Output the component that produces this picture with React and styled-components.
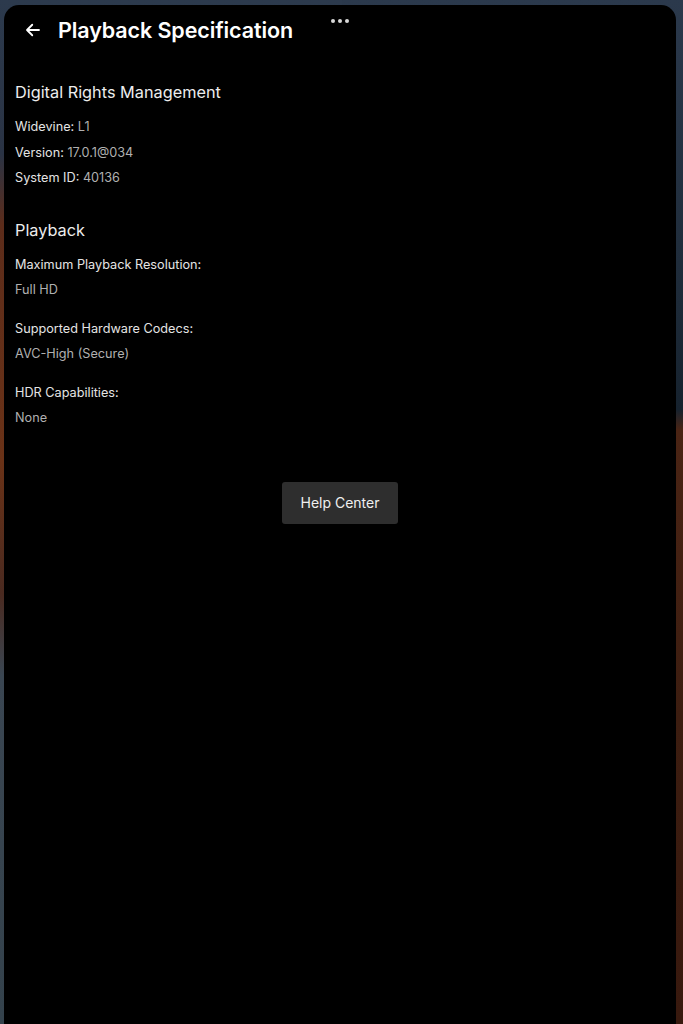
import React from "react";
import styled, { createGlobalStyle } from "styled-components";

const sections = [
  {
    title: "Digital Rights Management",
    inline: true,
    items: [
      { label: "Widevine:", value: "L1" },
      { label: "Version:", value: "17.0.1@034" },
      { label: "System ID:", value: "40136" }
    ]
  },
  {
    title: "Playback",
    inline: false,
    items: [
      { label: "Maximum Playback Resolution:", value: "Full HD" },
      { label: "Supported Hardware Codecs:", value: "AVC-High (Secure)" },
      { label: "HDR Capabilities:", value: "None" }
    ]
  }
];

export default function App() {
  return (
    <>
      <GlobalStyle />
      <Screen>
        <Panel>
          <Handle>
            <Dot />
            <Dot />
            <Dot />
          </Handle>
          <Header>
            <BackButton aria-label="Back">
              <svg width="18" height="18" viewBox="0 0 24 24" fill="none">
                <path
                  d="M20 12H5M11 5l-7 7 7 7"
                  stroke="#fff"
                  strokeWidth="2.4"
                  strokeLinecap="round"
                  strokeLinejoin="round"
                />
              </svg>
            </BackButton>
            <Title>Playback Specification</Title>
          </Header>
          <Content>
            {sections.map(section => (
              <Section key={section.title}>
                <SectionTitle>{section.title}</SectionTitle>
                {section.inline
                  ? section.items.map(item => (
                      <Line key={item.label}>
                        <Label>{item.label}</Label> <Value>{item.value}</Value>
                      </Line>
                    ))
                  : section.items.map(item => (
                      <Block key={item.label}>
                        <Line>
                          <Label>{item.label}</Label>
                        </Line>
                        <Line>
                          <Value>{item.value}</Value>
                        </Line>
                      </Block>
                    ))}
              </Section>
            ))}
            <ButtonRow>
              <HelpButton>Help Center</HelpButton>
            </ButtonRow>
          </Content>
        </Panel>
      </Screen>
    </>
  );
}

// Styles

const GlobalStyle = createGlobalStyle`
  html, body {
    margin: 0;
    height: 100%;
  }
  body {
    font-family: Inter, "Noto Sans", sans-serif;
    background:
      linear-gradient(180deg, #2b394c 0%, #1d2a38 30%, #16222e 40%, #4a2414 42%, #3c1d10 70%, #38190e 100%) right top / 50% 100% no-repeat,
      linear-gradient(180deg, #2c3a4d 0%, #2a3344 15%, #5c2c1a 22%, #6a3217 45%, #4a2a20 58%, #3a4652 66%, #34424c 100%) left top / 52% 100% no-repeat;
  }
  #root {
    height: 100%;
  }
`;

const Screen = styled.div`
  height: 100%;
  display: flex;
  flex-direction: column;
  padding: 5px 7px 0 4px;
  box-sizing: border-box;
`;

const Panel = styled.div`
  position: relative;
  flex: 1;
  background: #000;
  border-radius: 15px 15px 0 0;
  display: flex;
  flex-direction: column;
`;

const Handle = styled.div`
  position: absolute;
  top: 14px;
  left: 50%;
  transform: translateX(-50%);
  display: flex;
  gap: 3px;
`;

const Dot = styled.span`
  width: 4px;
  height: 4px;
  border-radius: 50%;
  background: #d8d8d8;
`;

const Header = styled.div`
  height: 50px;
  display: flex;
  align-items: center;
  padding-left: 20px;
  gap: 16px;
`;

const BackButton = styled.button`
  background: none;
  border: 0;
  padding: 0;
  display: flex;
  align-items: center;
  cursor: pointer;
`;

const Title = styled.h1`
  margin: 0;
  color: #fff;
  font-size: 21.5px;
  font-weight: 600;
  letter-spacing: -0.1px;
`;

const Content = styled.div`
  padding: 26px 11px 0;
  display: flex;
  flex-direction: column;
`;

const Section = styled.section`
  margin-bottom: 28px;
`;

const SectionTitle = styled.h2`
  margin: 0 0 11px;
  color: #ededed;
  font-size: 16.3px;
  font-weight: 400;
  line-height: 22px;
`;

const Block = styled.div`
  margin-bottom: 13px;
`;

const Line = styled.div`
  font-size: 12.7px;
  line-height: 25.5px;
`;

const Label = styled.span`
  color: #e4e4e4;
`;

const Value = styled.span`
  color: #b0b0b0;
`;

const ButtonRow = styled.div`
  display: flex;
  justify-content: center;
  padding-top: 10px;
`;

const HelpButton = styled.button`
  background: #2e2e2e;
  color: #f0f0f0;
  border: 0;
  border-radius: 3px;
  width: 116px;
  height: 42px;
  font-family: Inter, "Noto Sans", sans-serif;
  font-size: 14px;
  cursor: pointer;
`;
